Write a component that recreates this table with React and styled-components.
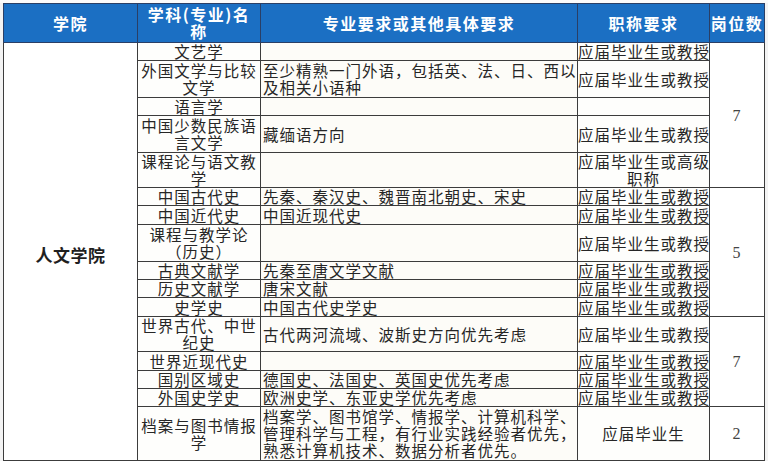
import React from 'react';
import styled, { createGlobalStyle } from 'styled-components';

const GlobalStyle = createGlobalStyle`
  html, body {
    margin: 0;
    padding: 0;
    background: #f3f3f3;
  }
  body {
    font-family: "Noto Sans CJK SC", "Noto Sans", sans-serif;
  }
`;

const columns = [134, 123, 317, 132, 55];

const rows = [
  { h: 17, subject: ['文艺学'], req: [], title: ['应届毕业生或教授'] },
  { h: 37, subject: ['外国文学与比较', '文学'], req: ['至少精熟一门外语，包括英、法、日、西以', '及相关小语种'], title: ['应届毕业生或教授'] },
  { h: 17, subject: ['语言学'], req: [], title: [] },
  { h: 37, subject: ['中国少数民族语', '言文学'], req: ['藏缅语方向'], title: ['应届毕业生或教授'] },
  { h: 35, subject: ['课程论与语文教', '学'], req: [], title: ['应届毕业生或高级', '职称'] },
  { h: 18, subject: ['中国古代史'], req: ['先秦、秦汉史、魏晋南北朝史、宋史'], title: ['应届毕业生或教授'] },
  { h: 19, subject: ['中国近代史'], req: ['中国近现代史'], title: ['应届毕业生或教授'] },
  { h: 37, subject: ['课程与教学论', '（历史）'], req: [], title: ['应届毕业生或教授'] },
  { h: 18, subject: ['古典文献学'], req: ['先秦至唐文学文献'], title: ['应届毕业生或教授'] },
  { h: 18, subject: ['历史文献学'], req: ['唐宋文献'], title: ['应届毕业生或教授'] },
  { h: 19, subject: ['史学史'], req: ['中国古代史学史'], title: ['应届毕业生或教授'] },
  { h: 35, subject: ['世界古代、中世', '纪史'], req: ['古代两河流域、波斯史方向优先考虑'], title: ['应届毕业生或教授'] },
  { h: 19, subject: ['世界近现代史'], req: [], title: ['应届毕业生或教授'] },
  { h: 18, subject: ['国别区域史'], req: ['德国史、法国史、英国史优先考虑'], title: ['应届毕业生或教授'] },
  { h: 18, subject: ['外国史学史'], req: ['欧洲史学、东亚史学优先考虑'], title: ['应届毕业生或教授'] },
  { h: 54, subject: ['档案与图书情报', '学'], req: ['档案学、图书馆学、情报学、计算机科学、', '管理科学与工程，有行业实践经验者优先，', '熟悉计算机技术、数据分析者优先。'], title: ['应届毕业生'] },
];

// 岗位数 merged cells: row index where each group starts
const posts = { 0: { span: 5, n: 7 }, 5: { span: 6, n: 5 }, 11: { span: 4, n: 7 }, 15: { span: 1, n: 2 } };

const Page = styled.div`
  padding: 3px 0 0 3px;
  background: linear-gradient(#fbfbfb, #fbfbfb) top left / 100% 3px no-repeat;
`;

const Table = styled.table`
  border-collapse: collapse;
  table-layout: fixed;
  width: 761px;
  background: #fefefc;
`;

const Col = styled.col`
  width: ${(p) => p.$w}px;
`;

const Row = styled.tr`
  height: ${(p) => p.$h}px;
`;

const HeadCell = styled.th`
  background: #1b6fc3;
  color: #ffffff;
  font-weight: 700;
  font-size: 16px;
  line-height: 17px;
  text-align: center;
  vertical-align: middle;
  padding: 0;
  border: 1px solid #2a3f66;
  letter-spacing: 1.5px;
  white-space: nowrap;
`;

const Cell = styled.td`
  border: 1px solid #3c3c3c;
  padding: 0 ${(p) => (p.$align === 'left' ? '2px' : '0')};
  font-size: 15.5px;
  letter-spacing: 1px;
  line-height: 17px;
  color: #262626;
  text-align: ${(p) => p.$align || 'center'};
  vertical-align: middle;
  white-space: nowrap;
  background: ${(p) => p.$bg || 'transparent'};
`;

const CollegeCell = styled(Cell)`
  font-weight: 700;
  font-size: 17px;
  letter-spacing: 0.5px;
  color: #1f1f1f;
  padding-top: 6px;
  background: #ffffff;
`;

const CountCell = styled(Cell)`
  font-family: "Liberation Serif", "DejaVu Serif", serif;
  font-size: 16px;
  color: #444;
  background: #ffffff;
`;

const Lines = ({ lines }) =>
  lines.map((l, i) => (
    <React.Fragment key={i}>
      {i > 0 && <br />}
      {l}
    </React.Fragment>
  ));

export default function App() {
  return (
    <Page>
      <GlobalStyle />
      <Table>
        <colgroup>
          {columns.map((w, i) => (
            <Col key={i} $w={w} />
          ))}
        </colgroup>
        <thead>
          <Row $h={39}>
            <HeadCell>学院</HeadCell>
            <HeadCell>学科(专业)名<br />称</HeadCell>
            <HeadCell>专业要求或其他具体要求</HeadCell>
            <HeadCell>职称要求</HeadCell>
            <HeadCell>岗位数</HeadCell>
          </Row>
        </thead>
        <tbody>
          {rows.map((r, i) => (
            <Row key={i} $h={r.h}>
              {i === 0 && <CollegeCell rowSpan={rows.length}>人文学院</CollegeCell>}
              <Cell><Lines lines={r.subject} /></Cell>
              <Cell $align="left" $bg="#fdfcf8"><Lines lines={r.req} /></Cell>
              <Cell><Lines lines={r.title} /></Cell>
              {posts[i] && <CountCell rowSpan={posts[i].span}>{posts[i].n}</CountCell>}
            </Row>
          ))}
        </tbody>
      </Table>
    </Page>
  );
}
